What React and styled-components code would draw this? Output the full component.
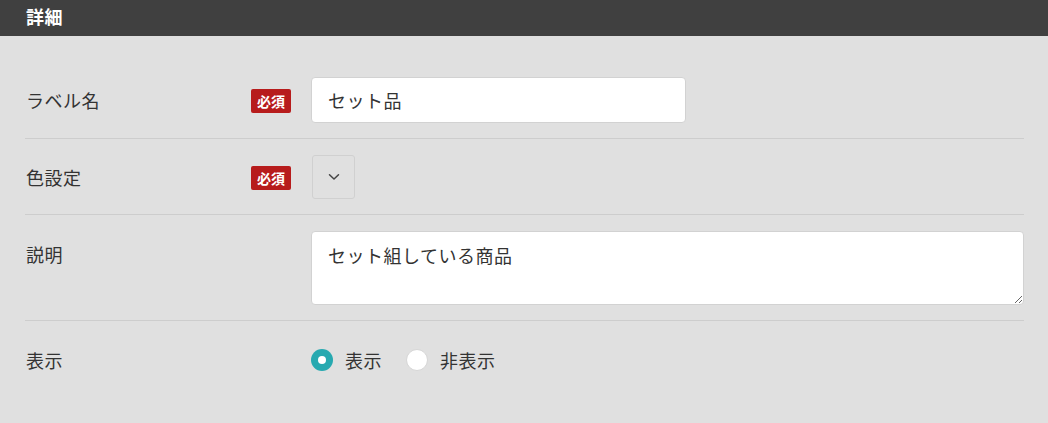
import React from "react";
import styled, { createGlobalStyle } from "styled-components";

const GlobalStyle = createGlobalStyle`
  html, body {
    margin: 0;
    padding: 0;
    background: #e0e0e0;
  }
  body {
    font-family: "Noto Sans CJK JP", "Noto Sans", sans-serif;
    color: #333;
  }
  * { box-sizing: border-box; }
`;

const Panel = styled.section`
  width: 1048px;
  min-height: 423px;
  background: #e0e0e0;
`;

const Header = styled.header`
  height: 36px;
  background: #404040;
  display: flex;
  align-items: center;
  padding: 0 26px 5px;
`;

const Title = styled.h2`
  margin: 0;
  font-size: 18px;
  font-weight: 700;
  letter-spacing: 0.5px;
  color: #fff;
  line-height: 1;
`;

const Form = styled.div`
  padding: 25px 24px 30px 25px;
`;

const Row = styled.div`
  display: grid;
  grid-template-columns: 206px 40px 1fr;
  column-gap: 20px;
  align-items: ${(p) => (p.$top ? "start" : "center")};
  padding: 16px 0 15px;
  border-bottom: ${(p) => (p.$last ? "none" : "1px solid #cdcdcd")};
`;

const Label = styled.div`
  font-size: 18px;
  line-height: 24px;
  letter-spacing: 0.5px;
  color: #333;
  padding-left: 1px;
  margin-top: ${(p) => (p.$top ? "11px" : "0")};
`;

const Badge = styled.span`
  display: inline-flex;
  align-items: center;
  justify-content: center;
  width: 40px;
  height: 24px;
  margin-top: 1px;
  border-radius: 2px;
  background: #b71c1c;
  color: #fff;
  font-size: 14px;
  font-weight: 700;
  line-height: 1;
`;

const Slot = styled.div``;

const TextInput = styled.input`
  display: block;
  width: 375px;
  height: 46px;
  padding: 0 16px;
  border: 1px solid #d2d2d2;
  border-radius: 4px;
  background: #fff;
  font-family: inherit;
  font-size: 18px;
  letter-spacing: 0.5px;
  color: #333;
  outline: none;
`;

const ColorButton = styled.button`
  display: flex;
  align-items: center;
  justify-content: center;
  width: 43px;
  height: 44px;
  margin-left: 1px;
  padding: 0;
  border: 1px solid #d0d0d0;
  border-radius: 3px;
  background: transparent;
  color: #444;
  cursor: pointer;
`;

const TextArea = styled.textarea`
  display: block;
  width: 713px;
  height: 74px;
  padding: 11px 16px;
  border: 1px solid #d2d2d2;
  border-radius: 4px;
  background: #fff;
  font-family: inherit;
  font-size: 18px;
  letter-spacing: 0.5px;
  line-height: 24px;
  color: #333;
  outline: none;
`;

const RadioGroup = styled.div`
  display: flex;
  align-items: center;
  gap: 24px;
  height: 46px;
`;

const RadioOption = styled.label`
  display: flex;
  align-items: center;
  gap: 12px;
  font-size: 18px;
  letter-spacing: 0.5px;
  color: #333;
  cursor: pointer;
`;

const RadioDot = styled.span`
  flex: none;
  width: 22px;
  height: 22px;
  border-radius: 50%;
  background: ${(p) => (p.$checked ? "#27a9b0" : "#fff")};
  border: ${(p) => (p.$checked ? "none" : "1px solid #d6d6d6")};
  display: flex;
  align-items: center;
  justify-content: center;
  &::after {
    content: "";
    display: ${(p) => (p.$checked ? "block" : "none")};
    width: 8px;
    height: 8px;
    border-radius: 50%;
    background: #fff;
  }
`;

const Chevron = () => (
  <svg width="12" height="8" viewBox="0 0 12 8" fill="none">
    <path d="M1.5 1.8 L6 6 L10.5 1.8" stroke="#444" strokeWidth="1.5" strokeLinecap="round" strokeLinejoin="round" />
  </svg>
);

export default function App() {
  const [visible, setVisible] = React.useState(true);
  return (
    <>
      <GlobalStyle />
      <Panel>
        <Header>
          <Title>詳細</Title>
        </Header>
        <Form>
          <Row>
            <Label>ラベル名</Label>
            <Badge>必須</Badge>
            <Slot>
              <TextInput defaultValue="セット品" />
            </Slot>
          </Row>
          <Row>
            <Label>色設定</Label>
            <Badge>必須</Badge>
            <Slot>
              <ColorButton type="button">
                <Chevron />
              </ColorButton>
            </Slot>
          </Row>
          <Row $top>
            <Label $top>説明</Label>
            <span />
            <Slot>
              <TextArea defaultValue="セット組している商品" />
            </Slot>
          </Row>
          <Row $last>
            <Label>表示</Label>
            <span />
            <RadioGroup>
              <RadioOption onClick={() => setVisible(true)}>
                <RadioDot $checked={visible} />
                表示
              </RadioOption>
              <RadioOption onClick={() => setVisible(false)}>
                <RadioDot $checked={!visible} />
                非表示
              </RadioOption>
            </RadioGroup>
          </Row>
        </Form>
      </Panel>
    </>
  );
}
